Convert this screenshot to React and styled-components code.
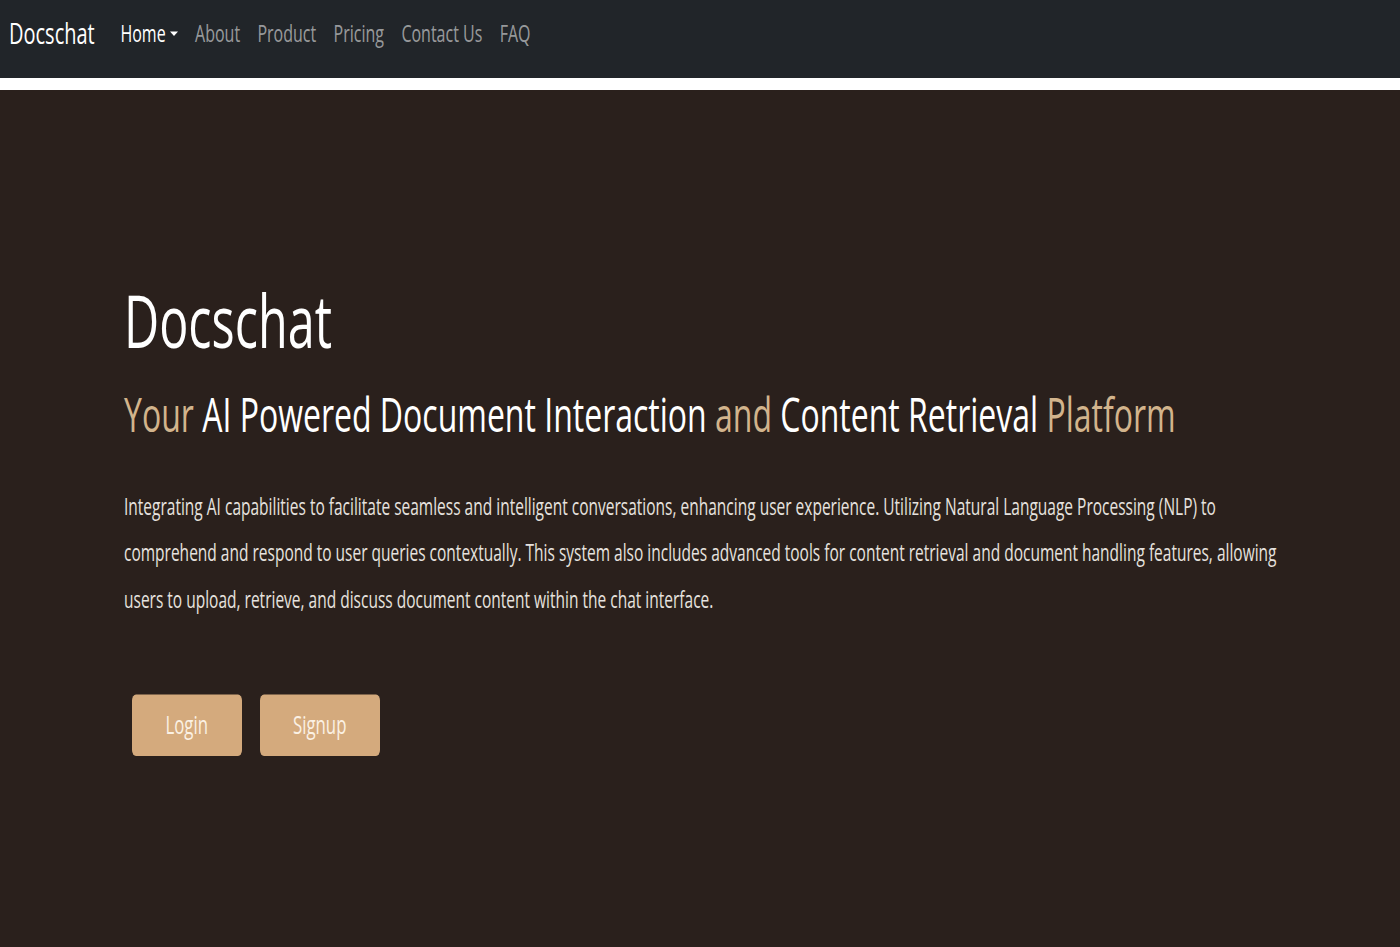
import styled, { createGlobalStyle } from "styled-components";

// the reference is stretched vertically, so the page is laid out flat and scaled
const SCALE_Y = 1.5;

const GlobalStyle = createGlobalStyle`
  html, body {
    margin: 0;
    padding: 0;
    background: #2a201c;
  }
  body {
    font-family: "Open Sans", "Noto Sans", sans-serif;
  }
`;

const links = ["About", "Product", "Pricing", "Contact Us", "FAQ"];

const App = () => {
  return (
    <Viewport>
      <GlobalStyle />
      <Stage>
        <NavBar>
          <Brand>Docschat</Brand>
          <NavList>
            <NavLink $active>
              Home<Caret />
            </NavLink>
            {links.map((l) => (
              <NavLink key={l}>{l}</NavLink>
            ))}
          </NavList>
        </NavBar>
        <Band />
        <Hero>
          <Title>Docschat</Title>
          <Subtitle>
            <Gold>Your</Gold> AI Powered Document Interaction <Gold>and</Gold>{" "}
            Content Retrieval <Gold>Platform</Gold>
          </Subtitle>
          <Lead>
            Integrating AI capabilities to facilitate seamless and intelligent
            conversations, enhancing user experience. Utilizing Natural Language
            Processing (NLP) to comprehend and respond to user queries
            contextually. This system also includes advanced tools for content
            retrieval and document handling features, allowing users to upload,
            retrieve, and discuss document content within the chat interface.
          </Lead>
          <Actions>
            <Button>Login</Button>
            <Button>Signup</Button>
          </Actions>
        </Hero>
      </Stage>
    </Viewport>
  );
};

export default App;

const Viewport = styled.div`
  width: 1400px;
  height: 947px;
  overflow: hidden;
  background: #2a201c;
`;

const Stage = styled.div`
  width: 1400px;
  height: ${947 / SCALE_Y}px;
  transform: scaleY(${SCALE_Y});
  transform-origin: top left;
`;

const NavBar = styled.nav`
  display: flex;
  align-items: center;
  height: 52px;
  padding: 0 9px 8px;
  background-color: #212529;
  box-sizing: border-box;
`;

const Brand = styled.div`
  font-size: 20px;
  color: #ffffff;
  margin-right: 17px;
  line-height: 1;
  margin-top: -1px;
`;

const NavList = styled.div`
  display: flex;
  align-items: center;
`;

const NavLink = styled.a`
  font-size: 16px;
  padding: 0 8.7px;
  color: ${(p) => (p.$active ? "#ffffff" : "rgba(255, 255, 255, 0.55)")};
  line-height: 1;
  cursor: pointer;
`;

const Caret = styled.span`
  display: inline-block;
  margin-left: 4px;
  vertical-align: 4px;
  border-top: 3.5px solid #ffffff;
  border-left: 4px solid transparent;
  border-right: 4px solid transparent;
`;

const Band = styled.div`
  height: 8px;
  background: #ffffff;
`;

const Hero = styled.section`
  padding: 124px 0 0 124px;
  width: 1166px;
`;

const Title = styled.h1`
  margin: 0;
  font-size: 48.5px;
  font-weight: 400;
  line-height: 1.2;
  color: #ffffff;
`;

const Subtitle = styled.h2`
  margin: 15px 0 0;
  font-size: 32px;
  font-weight: 400;
  line-height: 1.2;
  color: #ffffff;
  white-space: nowrap;
`;

const Gold = styled.span`
  color: #d2b48c;
`;

const Lead = styled.p`
  margin: 26px 0 0;
  font-size: 15.5px;
  line-height: 31.4px;
  color: #e6e2df;
`;

const Actions = styled.div`
  display: flex;
  gap: 18px;
  margin: 47px 0 0 8px;
`;

const Button = styled.button`
  font-family: inherit;
  font-size: 16.8px;
  line-height: 24px;
  padding: 8.5px 33.5px;
  border: none;
  border-radius: 4px;
  background: #d4aa7d;
  color: #fbf1e4;
  cursor: pointer;
`;
